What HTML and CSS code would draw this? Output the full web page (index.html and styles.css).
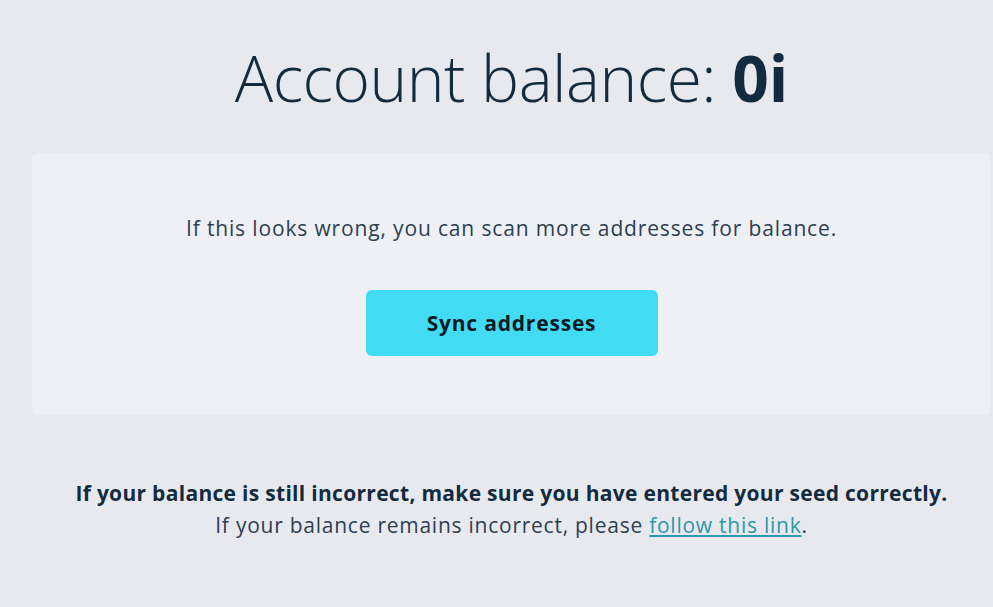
FILE: index.html
```html
<!DOCTYPE html>
<html>
<head>
<meta charset="utf-8">
<link rel="stylesheet" href="styles.css">
</head>
<body>
<main class="page">
  <h1 class="title">Account balance: <strong>0i</strong></h1>
  <section class="card">
    <p class="card-text">If this looks wrong, you can scan more addresses for balance.</p>
    <button class="btn">Sync addresses</button>
  </section>
  <div class="footer">
    <p class="strong-line">If your balance is still incorrect, make sure you have entered your seed correctly.</p>
    <p class="line">If your balance remains incorrect, please <a href="#" class="link">follow this link</a>.</p>
  </div>
</main>
</body>
</html>
```
FILE: styles.css
```css
html, body {
  margin: 0;
  padding: 0;
  background: #e8e9ef;
  height: 100%;
}
body {
  font-family: "Open Sans", "Lato", sans-serif;
  color: #132b3e;
}
.page {
  display: flex;
  flex-direction: column;
  align-items: center;
  padding: 34px 2px 0 32px;
}
.title {
  margin: 0;
  font-family: "Open Sans", sans-serif;
  font-weight: 300;
  font-size: 64px;
  line-height: 88px;
  color: #132b3e;
  letter-spacing: -0.5px;
}
.title strong {
  font-weight: 700;
  letter-spacing: 0;
}
.card {
  align-self: stretch;
  margin-top: 31px;
  background: #eff0f5;
  border-radius: 6px;
  height: 262px;
  box-sizing: border-box;
  display: flex;
  flex-direction: column;
  align-items: center;
  padding-top: 60px;
}
.card-text {
  margin: 0;
  font-size: 21px;
  line-height: 30px;
  letter-spacing: 0.85px;
  color: #2c4052;
}
.btn {
  margin-top: 47px;
  width: 292px;
  height: 66px;
  border: none;
  border-radius: 6px;
  background: #41dcf4;
  font-family: inherit;
  font-weight: 700;
  font-size: 21px;
  letter-spacing: 0.8px;
  color: #0c1a24;
}
.footer {
  margin-top: 62px;
  text-align: center;
  font-size: 21px;
  line-height: 32px;
}
.footer p {
  margin: 0;
}
.strong-line {
  font-weight: 700;
  letter-spacing: 0.3px;
  color: #132b3e;
}
.line {
  letter-spacing: 0.75px;
  color: #2c4052;
}
.link {
  color: #2d98ab;
  text-decoration: underline;
}
```
